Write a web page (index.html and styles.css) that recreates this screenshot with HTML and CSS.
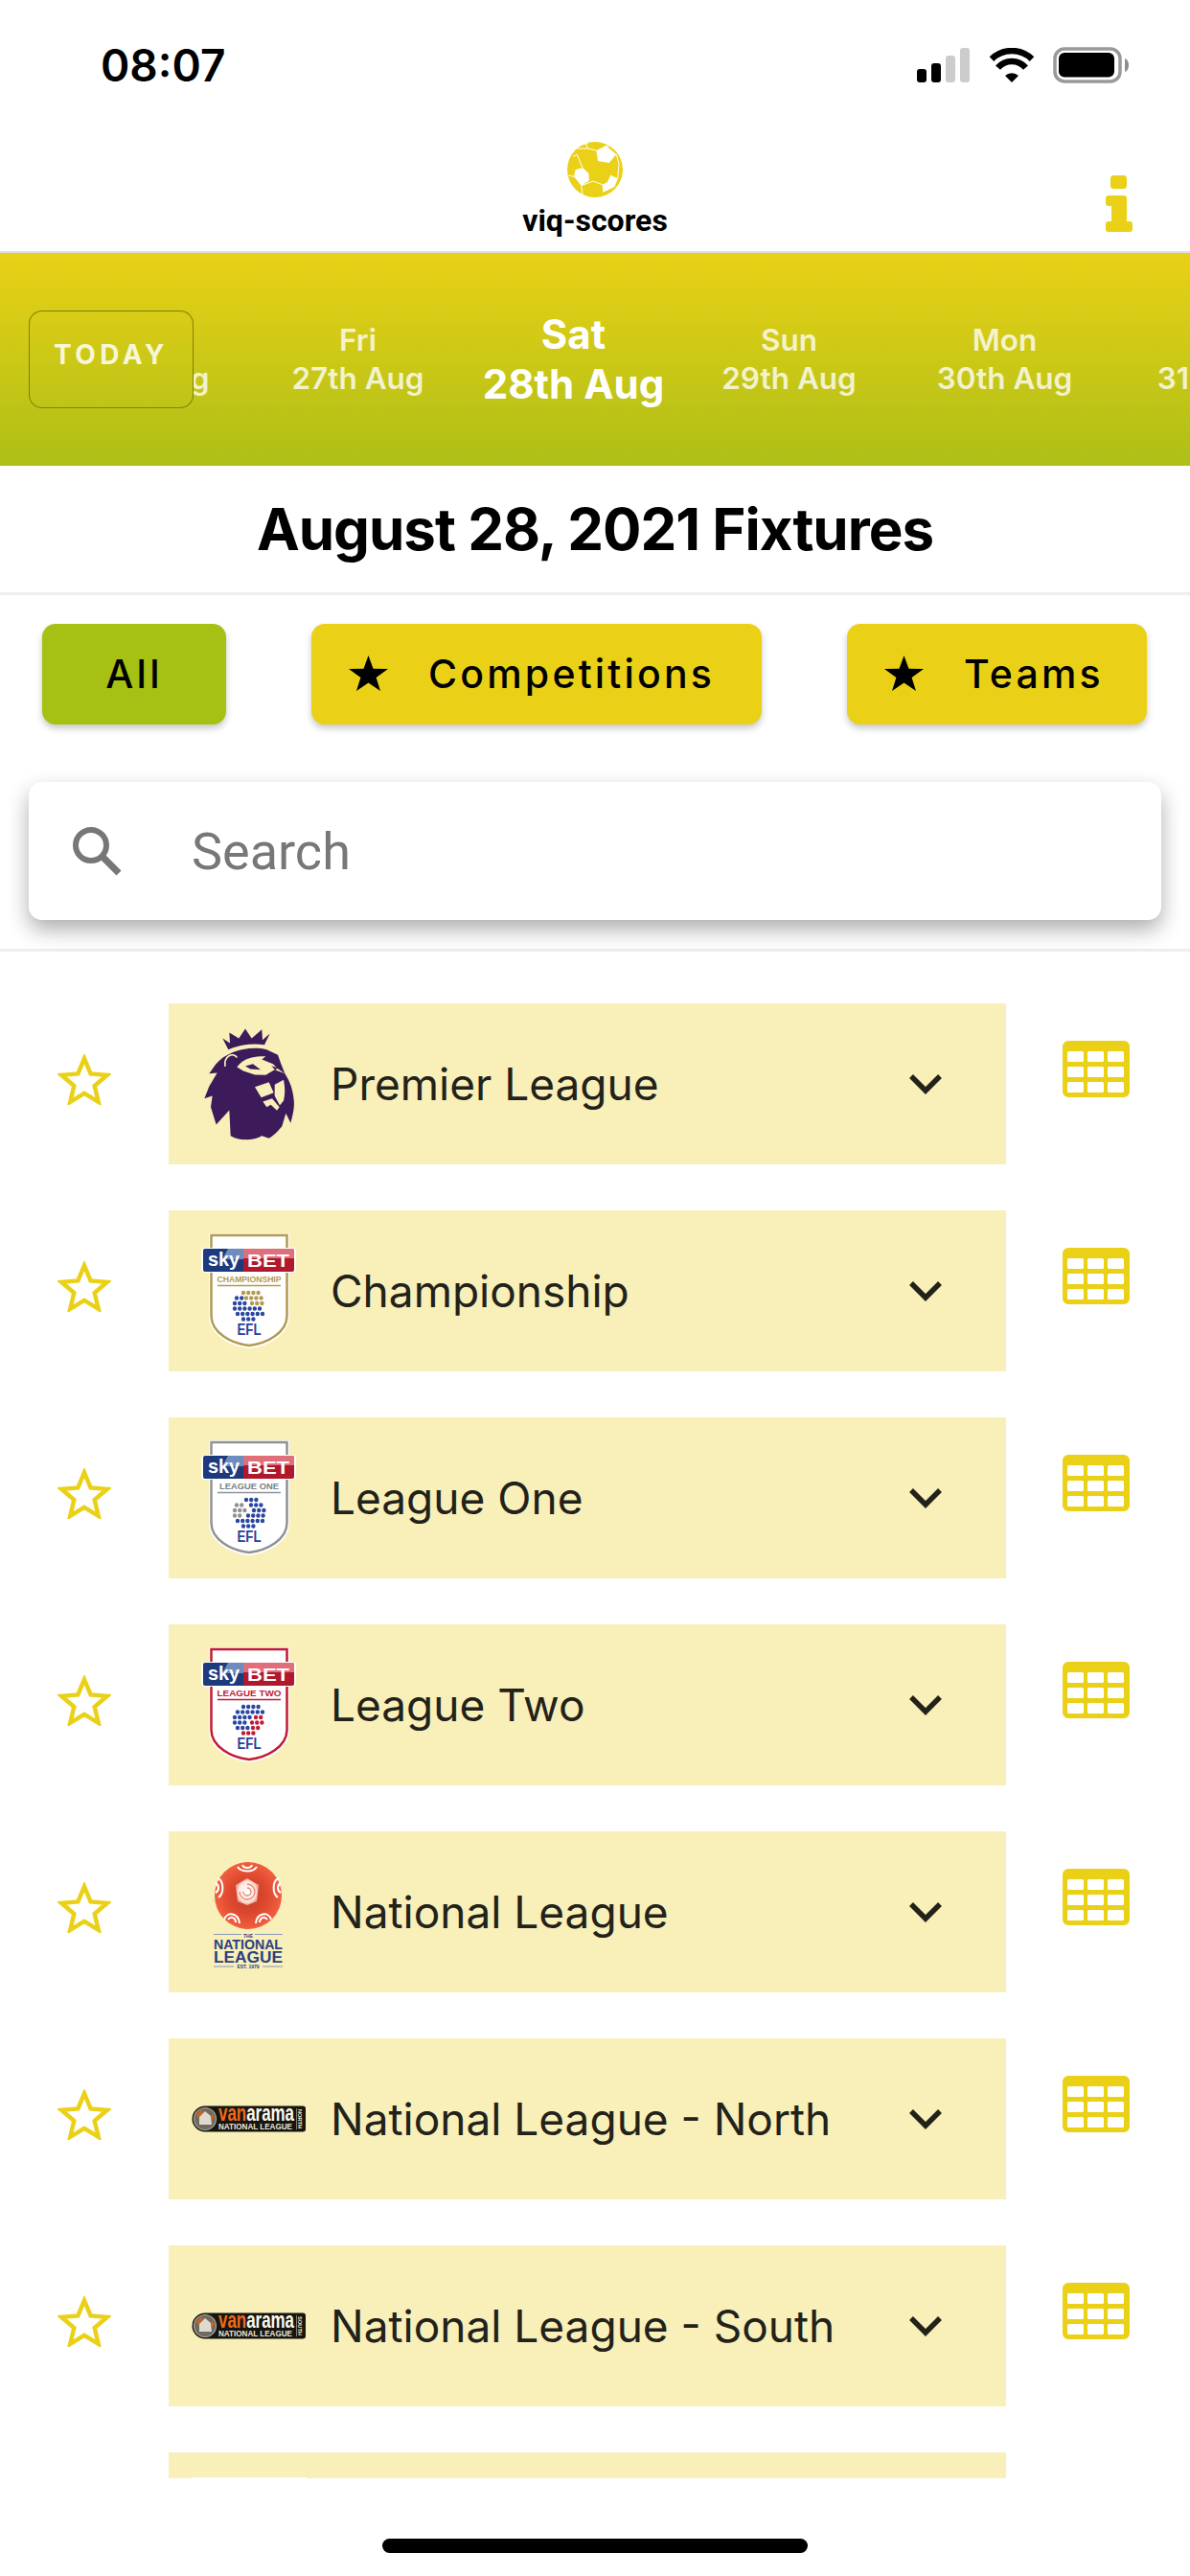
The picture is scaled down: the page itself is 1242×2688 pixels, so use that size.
FILE: index.html
```html
<!DOCTYPE html>
<html lang="en">
<head>
<meta charset="utf-8">
<title>viq-scores</title>
<link rel="stylesheet" href="styles.css">
</head>
<body>
<svg class="defs" width="0" height="0" aria-hidden="true">
  <defs>
    <symbol id="star-outline" viewBox="0 0 56 53">
      <path d="M28 4.500 34.600 20.400 51.800 21.800 38.700 33 42.700 49.800 28 40.800 13.300 49.800 17.300 33 4.200 21.800 21.400 20.400Z" fill="none" stroke="#ead117" stroke-width="4.500" stroke-linejoin="miter"/>
    </symbol>
    <symbol id="star-solid" viewBox="0 0 41 37">
      <path d="M20.500 0 25.500 13.800 41 14 28.600 22.900 33 37 20.500 28.600 8 37 12.400 22.900 0 14 15.500 13.800Z" fill="#000"/>
    </symbol>
    <symbol id="table" viewBox="0 0 70 59">
      <path fill="#ead117" fill-rule="evenodd" d="M6 0H64A6 6 0 0 1 70 6V53A6 6 0 0 1 64 59H6A6 6 0 0 1 0 53V6A6 6 0 0 1 6 0ZM6.500 11a1.500 1.500 0 0 0-1.500 1.500v8a1.500 1.500 0 0 0 1.500 1.500h14a1.500 1.500 0 0 0 1.500-1.500v-8a1.500 1.500 0 0 0-1.500-1.500ZM27.500 11a1.500 1.500 0 0 0-1.500 1.500v8a1.500 1.500 0 0 0 1.500 1.500h14a1.500 1.500 0 0 0 1.500-1.500v-8a1.500 1.500 0 0 0-1.500-1.500ZM48.500 11a1.500 1.500 0 0 0-1.500 1.500v8a1.500 1.500 0 0 0 1.500 1.500h14a1.500 1.500 0 0 0 1.500-1.500v-8a1.500 1.500 0 0 0-1.500-1.500ZM6.500 27a1.500 1.500 0 0 0-1.500 1.500v8a1.500 1.500 0 0 0 1.500 1.500h14a1.500 1.500 0 0 0 1.500-1.500v-8a1.500 1.500 0 0 0-1.500-1.500ZM27.500 27a1.500 1.500 0 0 0-1.500 1.500v8a1.500 1.500 0 0 0 1.500 1.500h14a1.500 1.500 0 0 0 1.500-1.500v-8a1.500 1.500 0 0 0-1.500-1.500ZM48.500 27a1.500 1.500 0 0 0-1.500 1.500v8a1.500 1.500 0 0 0 1.500 1.500h14a1.500 1.500 0 0 0 1.500-1.500v-8a1.500 1.500 0 0 0-1.500-1.500ZM6.500 43a1.500 1.500 0 0 0-1.500 1.500v8a1.500 1.500 0 0 0 1.500 1.500h14a1.500 1.500 0 0 0 1.500-1.500v-8a1.500 1.500 0 0 0-1.500-1.500ZM27.500 43a1.500 1.500 0 0 0-1.500 1.500v8a1.500 1.500 0 0 0 1.500 1.500h14a1.500 1.500 0 0 0 1.500-1.500v-8a1.500 1.500 0 0 0-1.500-1.500ZM48.500 43a1.500 1.500 0 0 0-1.500 1.500v8a1.500 1.500 0 0 0 1.500 1.500h14a1.500 1.500 0 0 0 1.500-1.500v-8a1.500 1.500 0 0 0-1.500-1.500Z"/>
    </symbol>
    <symbol id="chevron" viewBox="0 0 36 22">
      <path d="M3 3 18 18 33 3" fill="none" stroke="#22221a" stroke-width="5.500"/>
    </symbol>
    <symbol id="banner" viewBox="0 0 100 26">
      <rect x="0" y="0" width="99" height="26" rx="4" fill="#fff"/>
      <path d="M2 3a2 2 0 0 1 2-2H44V25H4a2 2 0 0 1-2-2Z" fill="#1c3a7c"/>
      <path d="M44 1H95a2 2 0 0 1 2 2V23a2 2 0 0 1-2 2H44Z" fill="#b0182c"/>
      <path d="M28 1H44V12H22Z" fill="#7d9bc9" opacity=".85"/>
      <path d="M44 1H95a2 2 0 0 1 2 2V11H44Z" fill="#e77f88" opacity=".85"/>
    </symbol>
    <symbol id="vanarama" viewBox="0 0 120 30">
      <path d="M14 1.500H116a3 3 0 0 1 3 3V25.500a3 3 0 0 1-3 3H14a13.500 13.500 0 0 1 0-27Z" fill="#17150f"/>
      <circle cx="14" cy="15" r="11.500" fill="#6e6a60" stroke="#a9a599" stroke-width="1.200"/>
      <path d="M14 7 20 12 21 21H8V13Z" fill="#dedacd"/>
      <path d="M5 11 10 5 12 8 7 14Z" fill="#d2601f"/>
      <path d="M21 9 24 14 21 16Z" fill="#d2601f"/>
      <text class="van-title" x="28" y="17" textLength="79" lengthAdjust="spacingAndGlyphs"><tspan fill="#ee6a1c">van</tspan><tspan fill="#fbf8ec">arama</tspan></text>
      <text class="van-sub" x="28" y="26" textLength="77" lengthAdjust="spacingAndGlyphs">NATIONAL LEAGUE</text>
      <path d="M109.500 4V26" stroke="#807c70" stroke-width="1"/>
    </symbol>
  </defs>
</svg>

<main class="app">
  <header class="status">
    <span class="clock">08:07</span>
    <div class="status-icons">
      <svg class="signal" width="55" height="36" viewBox="0 0 55 36">
        <rect x="0" y="22" width="10" height="14" rx="3" fill="#000"/>
        <rect x="15" y="16" width="10" height="20" rx="3" fill="#000"/>
        <rect x="30" y="8" width="10" height="28" rx="3" fill="#ccc"/>
        <rect x="45" y="0" width="10" height="36" rx="3" fill="#ccc"/>
      </svg>
      <svg class="wifi" width="48" height="36" viewBox="0 0 48 36">
        <path d="M3 11.600A30 30 0 0 1 45 11.600" fill="none" stroke="#000" stroke-width="6.500"/>
        <path d="M9.500 20.700A19 19 0 0 1 38.500 20.700" fill="none" stroke="#000" stroke-width="6.500"/>
        <path d="M24 36 17 29A10 10 0 0 1 31 29Z" fill="#000"/>
      </svg>
      <svg class="battery" width="80" height="38" viewBox="0 0 80 38">
        <rect x="3" y="2" width="68" height="34" rx="10" fill="none" stroke="#999" stroke-width="3.500"/>
        <rect x="7" y="6" width="58" height="25.500" rx="6" fill="#000"/>
        <path d="M76 12c3 1 4 4 4 7s-1 6-4 7Z" fill="#8e8e8e"/>
      </svg>
    </div>
  </header>

  <nav class="nav">
    <div class="brand">
      <svg class="ball" width="58" height="58" viewBox="214 85 174 174">
        <circle cx="301" cy="172" r="87" fill="#ead117"/>
        <path fill="#fff" d="M305 112 335 97 368 124 345 151 310 145ZM240 172 262 166 281 183 283 206 258 222 235 194ZM350 189 373 200 362 226 326 243 324 219 340 211Z"/>
        <path fill="none" stroke="#fff" stroke-width="3" d="M232 112C245 98 262 92 279 90M245 106 279 106 305 112M279 106 272 92M335 97 345 100M368 124 376 155 372 200M258 222 262 250M258 222 295 208 324 219M262 166 245 125 232 131M235 194 218 190"/>
      </svg>
      <span class="brand-name">viq-scores</span>
    </div>
    <svg class="info" width="28" height="60" viewBox="0 0 28 60">
      <rect x="5" y="0" width="17" height="14" rx="3.500" fill="#ead117"/>
      <path d="M3 21H19a3 3 0 0 1 3 3V48H25a3 3 0 0 1 3 3V56a3 3 0 0 1-3 3H3a3 3 0 0 1-3-3V51a3 3 0 0 1 3-3H6V32H3a3 3 0 0 1-3-3V24a3 3 0 0 1 3-3Z" fill="#ead117"/>
    </svg>
  </nav>

  <section class="dates">
    <div class="date"><span>Thu</span><span>26th Aug</span></div>
    <div class="date"><span>Fri</span><span>27th Aug</span></div>
    <div class="date date-active"><span>Sat</span><span>28th Aug</span></div>
    <div class="date"><span>Sun</span><span>29th Aug</span></div>
    <div class="date"><span>Mon</span><span>30th Aug</span></div>
    <div class="date"><span>Tue</span><span>31st Aug</span></div>
    <button class="today" type="button">TODAY</button>
  </section>

  <h1 class="title">August 28, 2021 Fixtures</h1>

  <section class="filters">
    <button class="chip chip-all" type="button">All</button>
    <button class="chip chip-star chip-comp" type="button"><svg class="chip-icon" width="41" height="37"><use href="#star-solid"/></svg>Competitions</button>
    <button class="chip chip-star chip-teams" type="button"><svg class="chip-icon" width="41" height="37"><use href="#star-solid"/></svg>Teams</button>
  </section>

  <section class="search-wrap">
    <div class="search">
      <svg class="search-icon" width="52" height="52" viewBox="0 0 52 52">
        <circle cx="20" cy="20" r="16" fill="none" stroke="#777" stroke-width="6"/>
        <path d="M31 31 49 49" fill="none" stroke="#777" stroke-width="7"/>
      </svg>
      <span class="search-text">Search</span>
    </div>
  </section>

  <section class="list">
    <article class="fixture">
      <div class="fav"><svg width="56" height="53"><use href="#star-outline"/></svg></div>
      <div class="league">
        <div class="logo">
          <svg width="100" height="122" viewBox="60 30 300 365">
            <path fill="#3d1b5b" d="M127 70 150 85 148 52 178 70 198 40 218 70 250 42 252 75 275 55 258 90C220 84 180 90 145 105Z"/>
            <path fill="#3d1b5b" d="M128 130C118 138 110 146 105 152L85 180 110 178 85 220 70 258 95 250 90 285 107 340 148 295 152 375C180 392 225 390 250 375L272 383C290 372 305 355 313 345L325 305 340 335C350 300 352 280 350 262 347 230 338 205 322 180L310 150 300 122 265 105C225 96 175 100 128 130Z"/>
            <path fill="#f8efb9" d="M172 160C185 140 210 125 262 126L250 136 285 150 300 165 322 180 290 168 262 185 228 184 192 172Z"/>
            <path fill="#3d1b5b" d="M198 157 222 150 246 168 214 166Z"/>
            <path fill="#3d1b5b" d="M280 156 300 162 292 170Z"/>
            <path fill="#f8efb9" d="M228 222 272 207 287 240 248 255Z"/>
            <path fill="#f8efb9" d="M290 215 318 200C323 225 323 245 318 265L306 280 290 250Z"/>
            <path fill="#f8efb9" d="M253 268 282 258 305 285 297 296 278 278 265 285Z"/>
            <path fill="none" stroke="#f8efb9" stroke-width="5" d="M135 158C130 125 160 112 172 130"/>
          </svg>
        </div>
        <span class="league-name">Premier League</span>
        <svg class="chevron" width="36" height="22"><use href="#chevron"/></svg>
      </div>
      <div class="tbl"><svg width="70" height="59"><use href="#table"/></svg></div>
    </article>

    <article class="fixture">
      <div class="fav"><svg width="56" height="53"><use href="#star-outline"/></svg></div>
      <div class="league">
        <div class="logo">
          <svg width="100" height="120" viewBox="0 0 100 120">
            <path d="M8 0H92V86C92 106 70 118 50 120 30 118 8 106 8 86Z" fill="#fff"/>
            <path d="M10.500 2H89.500V86C89.500 104 68 115 50 117 32 115 10.500 104 10.500 86Z" fill="none" stroke="#b29a50" stroke-width="2.500"/>
            <use href="#banner" x="0" y="15" width="100" height="26"/>
            <text class="sky" x="7" y="34" textLength="33" lengthAdjust="spacingAndGlyphs">sky</text><text class="bet" x="48" y="35" textLength="44" lengthAdjust="spacingAndGlyphs">BET</text>
            <text class="efl-sub efl-gold" x="50" y="51" textLength="67" lengthAdjust="spacingAndGlyphs">CHAMPIONSHIP</text>
            <path d="M17 54.500H83" stroke="#b29a50" stroke-width="1.300"/>
            <g fill="none" stroke-width="4.400" stroke-linecap="round" stroke-dasharray="0 5.200">
              <path stroke="#b29a50" d="M44 62H60M47 67.500H64M53 73H67"/>
              <path stroke="#2a46a0" d="M37 67.500H43M35 73H48M35 78.500H66M38 84H64M44 89.500H58"/>
            </g>
            <text class="efl" x="50" y="106" textLength="25" lengthAdjust="spacingAndGlyphs">EFL</text>
          </svg>
        </div>
        <span class="league-name">Championship</span>
        <svg class="chevron" width="36" height="22"><use href="#chevron"/></svg>
      </div>
      <div class="tbl"><svg width="70" height="59"><use href="#table"/></svg></div>
    </article>

    <article class="fixture">
      <div class="fav"><svg width="56" height="53"><use href="#star-outline"/></svg></div>
      <div class="league">
        <div class="logo">
          <svg width="100" height="120" viewBox="0 0 100 120">
            <path d="M8 0H92V86C92 106 70 118 50 120 30 118 8 106 8 86Z" fill="#fff"/>
            <path d="M10.500 2H89.500V86C89.500 104 68 115 50 117 32 115 10.500 104 10.500 86Z" fill="none" stroke="#8f9294" stroke-width="2.500"/>
            <use href="#banner" x="0" y="15" width="100" height="26"/>
            <text class="sky" x="7" y="34" textLength="33" lengthAdjust="spacingAndGlyphs">sky</text><text class="bet" x="48" y="35" textLength="44" lengthAdjust="spacingAndGlyphs">BET</text>
            <text class="efl-sub efl-grey" x="50" y="51" textLength="62" lengthAdjust="spacingAndGlyphs">LEAGUE ONE</text>
            <path d="M17 54.500H83" stroke="#8f9294" stroke-width="1.300"/>
            <g fill="none" stroke-width="4.400" stroke-linecap="round" stroke-dasharray="0 5.200">
              <path stroke="#2a46a0" d="M47 62H60M52 67.500H64M55 73H67"/>
              <path stroke="#8f9294" d="M37 67.500H47M35 73H49M35 78.500H44"/>
              <path stroke="#2a46a0" d="M49 78.500H66M38 84H64M44 89.500H58"/>
            </g>
            <text class="efl" x="50" y="106" textLength="25" lengthAdjust="spacingAndGlyphs">EFL</text>
          </svg>
        </div>
        <span class="league-name">League One</span>
        <svg class="chevron" width="36" height="22"><use href="#chevron"/></svg>
      </div>
      <div class="tbl"><svg width="70" height="59"><use href="#table"/></svg></div>
    </article>

    <article class="fixture">
      <div class="fav"><svg width="56" height="53"><use href="#star-outline"/></svg></div>
      <div class="league">
        <div class="logo">
          <svg width="100" height="120" viewBox="0 0 100 120">
            <path d="M8 0H92V86C92 106 70 118 50 120 30 118 8 106 8 86Z" fill="#fff"/>
            <path d="M10.500 2H89.500V86C89.500 104 68 115 50 117 32 115 10.500 104 10.500 86Z" fill="none" stroke="#c01a35" stroke-width="2.500"/>
            <use href="#banner" x="0" y="15" width="100" height="26"/>
            <text class="sky" x="7" y="34" textLength="33" lengthAdjust="spacingAndGlyphs">sky</text><text class="bet" x="48" y="35" textLength="44" lengthAdjust="spacingAndGlyphs">BET</text>
            <text class="efl-sub efl-red" x="50" y="51" textLength="67" lengthAdjust="spacingAndGlyphs">LEAGUE TWO</text>
            <path d="M17 54.500H83" stroke="#c01a35" stroke-width="1.300"/>
            <g fill="none" stroke-width="4.400" stroke-linecap="round" stroke-dasharray="0 5.200">
              <path stroke="#2a46a0" d="M44 62H60M38 67.500H64M35 73H54M35 78.500H48M38 84H50"/>
              <path stroke="#c01a35" d="M57 73H66M53 78.500H66M54 84H64M44 89.500H58"/>
            </g>
            <text class="efl" x="50" y="106" textLength="25" lengthAdjust="spacingAndGlyphs">EFL</text>
          </svg>
        </div>
        <span class="league-name">League Two</span>
        <svg class="chevron" width="36" height="22"><use href="#chevron"/></svg>
      </div>
      <div class="tbl"><svg width="70" height="59"><use href="#table"/></svg></div>
    </article>

    <article class="fixture">
      <div class="fav"><svg width="56" height="53"><use href="#star-outline"/></svg></div>
      <div class="league">
        <div class="logo">
          <svg class="logo-nl" width="74" height="112" viewBox="0 0 74 112">
            <defs>
              <radialGradient id="nl-red"><stop offset="0" stop-color="#c2402c"/><stop offset=".55" stop-color="#dd472e"/><stop offset="1" stop-color="#f2603f"/></radialGradient>
              <radialGradient id="nl-rose"><stop offset="0" stop-color="#fff"/><stop offset=".75" stop-color="#fde6df"/><stop offset="1" stop-color="#f2a08c"/></radialGradient>
            </defs>
            <circle cx="36" cy="35" r="35" fill="url(#nl-red)"/>
            <path d="M35 17 47 24 45 41 35 45 25 41 23 24Z" fill="url(#nl-rose)"/>
            <g fill="none" stroke="#e8806a" stroke-width="1.300">
              <path d="M35 23A8 8 0 1 1 27 31M35 27A4 4 0 1 1 31 31"/>
            </g>
            <g fill="none" stroke="#fff" stroke-width="2">
              <path d="M25 5C29 11 41 11 45 5M30 3C31 7 39 7 40 3"/>
              <path d="M4 17C11 19 11 33 5 37M2 22C6 24 6 30 2 32"/>
              <path d="M68 17C61 19 61 33 67 37M70 22C66 24 66 30 70 32"/>
              <path d="M11 60C14 51 26 53 27 64M15 60C18 56 23 58 23 63"/>
              <path d="M60 60C57 51 45 53 44 64M56 60C53 56 48 58 48 63"/>
            </g>
            <path d="M0 75.500H29M43 75.500H72M0 109H21M51 109H72" stroke="#8b98b8" stroke-width="1.200"/>
            <text class="nl-small" x="36" y="79">THE</text>
            <text class="nl-big" x="36" y="91" textLength="72" lengthAdjust="spacingAndGlyphs">NATIONAL</text>
            <text class="nl-big nl-bigger" x="36" y="104.500" textLength="72" lengthAdjust="spacingAndGlyphs">LEAGUE</text>
            <text class="nl-small" x="36" y="111">EST. 1979</text>
          </svg>
        </div>
        <span class="league-name">National League</span>
        <svg class="chevron" width="36" height="22"><use href="#chevron"/></svg>
      </div>
      <div class="tbl"><svg width="70" height="59"><use href="#table"/></svg></div>
    </article>

    <article class="fixture">
      <div class="fav"><svg width="56" height="53"><use href="#star-outline"/></svg></div>
      <div class="league">
        <div class="logo">
          <svg width="120" height="30" viewBox="0 0 120 30">
            <use href="#vanarama" width="120" height="30"/>
            <text class="van-side" transform="translate(111 5) rotate(90)" textLength="20" lengthAdjust="spacingAndGlyphs">NORTH</text>
          </svg>
        </div>
        <span class="league-name">National League - North</span>
        <svg class="chevron" width="36" height="22"><use href="#chevron"/></svg>
      </div>
      <div class="tbl"><svg width="70" height="59"><use href="#table"/></svg></div>
    </article>

    <article class="fixture">
      <div class="fav"><svg width="56" height="53"><use href="#star-outline"/></svg></div>
      <div class="league">
        <div class="logo">
          <svg width="120" height="30" viewBox="0 0 120 30">
            <use href="#vanarama" width="120" height="30"/>
            <text class="van-side" transform="translate(111 5) rotate(90)" textLength="20" lengthAdjust="spacingAndGlyphs">SOUTH</text>
          </svg>
        </div>
        <span class="league-name">National League - South</span>
        <svg class="chevron" width="36" height="22"><use href="#chevron"/></svg>
      </div>
      <div class="tbl"><svg width="70" height="59"><use href="#table"/></svg></div>
    </article>

    <article class="fixture fixture-cut">
      <div class="fav"></div>
      <div class="league league-top"><div class="logo logo-white"></div></div>
      <div class="tbl"></div>
    </article>
  </section>

  <footer class="home-area"><div class="home-bar"></div></footer>
</main>
</body>
</html>
```

FILE: styles.css
```css
* { box-sizing: border-box; }
html, body { margin: 0; padding: 0; background: #fff; }
body { width: 1242px; height: 2688px; overflow: hidden; font-family: Inter, "Liberation Sans", sans-serif; color: #000; }
.defs { position: absolute; }
.app { display: flex; flex-direction: column; width: 1242px; height: 2688px; }

/* status bar */
.status { display: flex; align-items: center; justify-content: space-between; height: 135px; padding: 0 64px 0 105px; flex: none; }
.clock { font-size: 46px; font-weight: 600; letter-spacing: 0; line-height: 1; }
.status-icons { display: flex; align-items: center; }
.signal { margin-right: 20px; }
.wifi { margin-right: 18px; }

/* nav */
.nav { position: relative; height: 129px; flex: none; display: flex; justify-content: center; padding-top: 13px; border-bottom: 2px solid #dedede; }
.brand { display: flex; flex-direction: column; align-items: center; }
.ball { display: block; }
.brand-name { font-family: Roboto, sans-serif; font-weight: 700; font-size: 32px; line-height: 36px; margin-top: 6px; color: #000; }
.info { position: absolute; right: 60px; top: 48px; }

/* date strip */
.dates { position: relative; height: 222px; flex: none; display: flex; align-items: center; padding-left: 36px; overflow: hidden; background: linear-gradient(180deg, #e9d116 0%, #aebf17 100%); }
.date { flex: none; width: 225px; display: flex; flex-direction: column; align-items: center; color: rgba(255,255,255,.78); font-size: 31.500px; font-weight: 600; line-height: 40px; }
.date-active { color: #fff; font-size: 42px; font-weight: 700; line-height: 52px; }
.today { position: absolute; left: 30px; top: 60px; width: 172px; height: 102px; border: 1px solid rgba(90,90,0,.65); border-radius: 14px; background: linear-gradient(180deg, #d9cc16, #bec417); color: #f8f6d8; font-family: Inter, sans-serif; font-size: 28px; font-weight: 700; letter-spacing: 4.500px; padding: 0 0 10px; }

/* title */
.title { margin: 0; height: 132px; flex: none; display: flex; align-items: center; justify-content: center; font-size: 60px; font-weight: 700; letter-spacing: -1px; color: #000; }

/* filters */
.filters { flex: none; display: flex; justify-content: space-between; padding: 30px 45px 0 44px; height: 198px; border-top: 3px solid #eee; }
.chip { height: 105px; border: 0; border-radius: 14px; font-family: Inter, sans-serif; font-size: 41px; font-weight: 500; letter-spacing: 3.200px; color: #000; box-shadow: 0 4px 7px rgba(0,0,0,.22); display: flex; align-items: center; padding-bottom: 2px; }
.chip-all { width: 192px; background: #a6c013; justify-content: center; }
.chip-star { background: #ead117; padding: 0 0 2px 39px; }
.chip-comp { width: 470px; }
.chip-teams { width: 313px; }
.chip-icon { margin-right: 42px; }

/* search */
.search-wrap { flex: none; height: 177px; padding: 0 30px; border-bottom: 3px solid #eee; }
.search { display: flex; align-items: center; height: 144px; background: #fff; border-radius: 14px; box-shadow: 0 10px 22px rgba(0,0,0,.32); padding: 0 0 0 45px; }
.search-icon { margin-right: 73px; }
.search-text { font-family: Roboto, sans-serif; font-size: 54px; color: #777; }

/* list */
.list { flex: none; height: 1593px; overflow: hidden; padding-top: 54px; }
.fixture { display: grid; grid-template-columns: 176px 874px 192px; height: 168px; margin-bottom: 48px; }
.fav { display: flex; justify-content: center; padding-top: 53px; }
.tbl { padding: 39px 0 0 59px; }
.league { display: flex; align-items: center; background: #f8efb9; padding-left: 24px; }
.league-top { align-items: flex-start; padding-top: 26px; }
.logo { width: 120px; flex: none; display: flex; justify-content: center; align-items: center; }
.logo-nl { margin-top: 8px; }
.logo-white { height: 100px; background: #fff; }
.league-name { margin-left: 25px; font-size: 46px; color: #22221a; line-height: 1; letter-spacing: 0; }
.chevron { margin-left: auto; margin-right: 66px; }

/* logo text */
.sky { font-family: "Liberation Sans", sans-serif; font-size: 21px; font-weight: 700; fill: #fff; }
.bet { font-family: "Liberation Sans", sans-serif; font-size: 19px; font-weight: 700; fill: #fff; }
.efl-sub { font-family: "Liberation Sans", sans-serif; font-size: 9.300px; font-weight: 700; text-anchor: middle; }
.efl-gold { fill: #b29a50; }
.efl-grey { fill: #7c8083; }
.efl-red { fill: #c01a35; }
.efl { font-family: "Liberation Sans", sans-serif; font-size: 16px; font-weight: 700; fill: #26409a; text-anchor: middle; }
.nl-small { font-family: "Liberation Sans", sans-serif; font-size: 5px; font-weight: 700; fill: #2b3f80; text-anchor: middle; }
.nl-big { font-family: "Liberation Sans", sans-serif; font-size: 14px; font-weight: 700; fill: #2b3f80; text-anchor: middle; }
.nl-bigger { font-size: 17px; }
.van-title { font-family: "Liberation Sans", sans-serif; font-size: 24px; font-weight: 700; }
.van-sub { font-family: "Liberation Sans", sans-serif; font-size: 8.500px; font-weight: 700; fill: #ece8da; }
.van-side { font-family: "Liberation Sans", sans-serif; font-size: 5px; font-weight: 700; fill: #ece8da; }

/* home */
.home-area { flex: 1; display: flex; justify-content: center; padding-top: 63px; }
.home-bar { width: 444px; height: 15px; border-radius: 8px; background: #000; }
```
